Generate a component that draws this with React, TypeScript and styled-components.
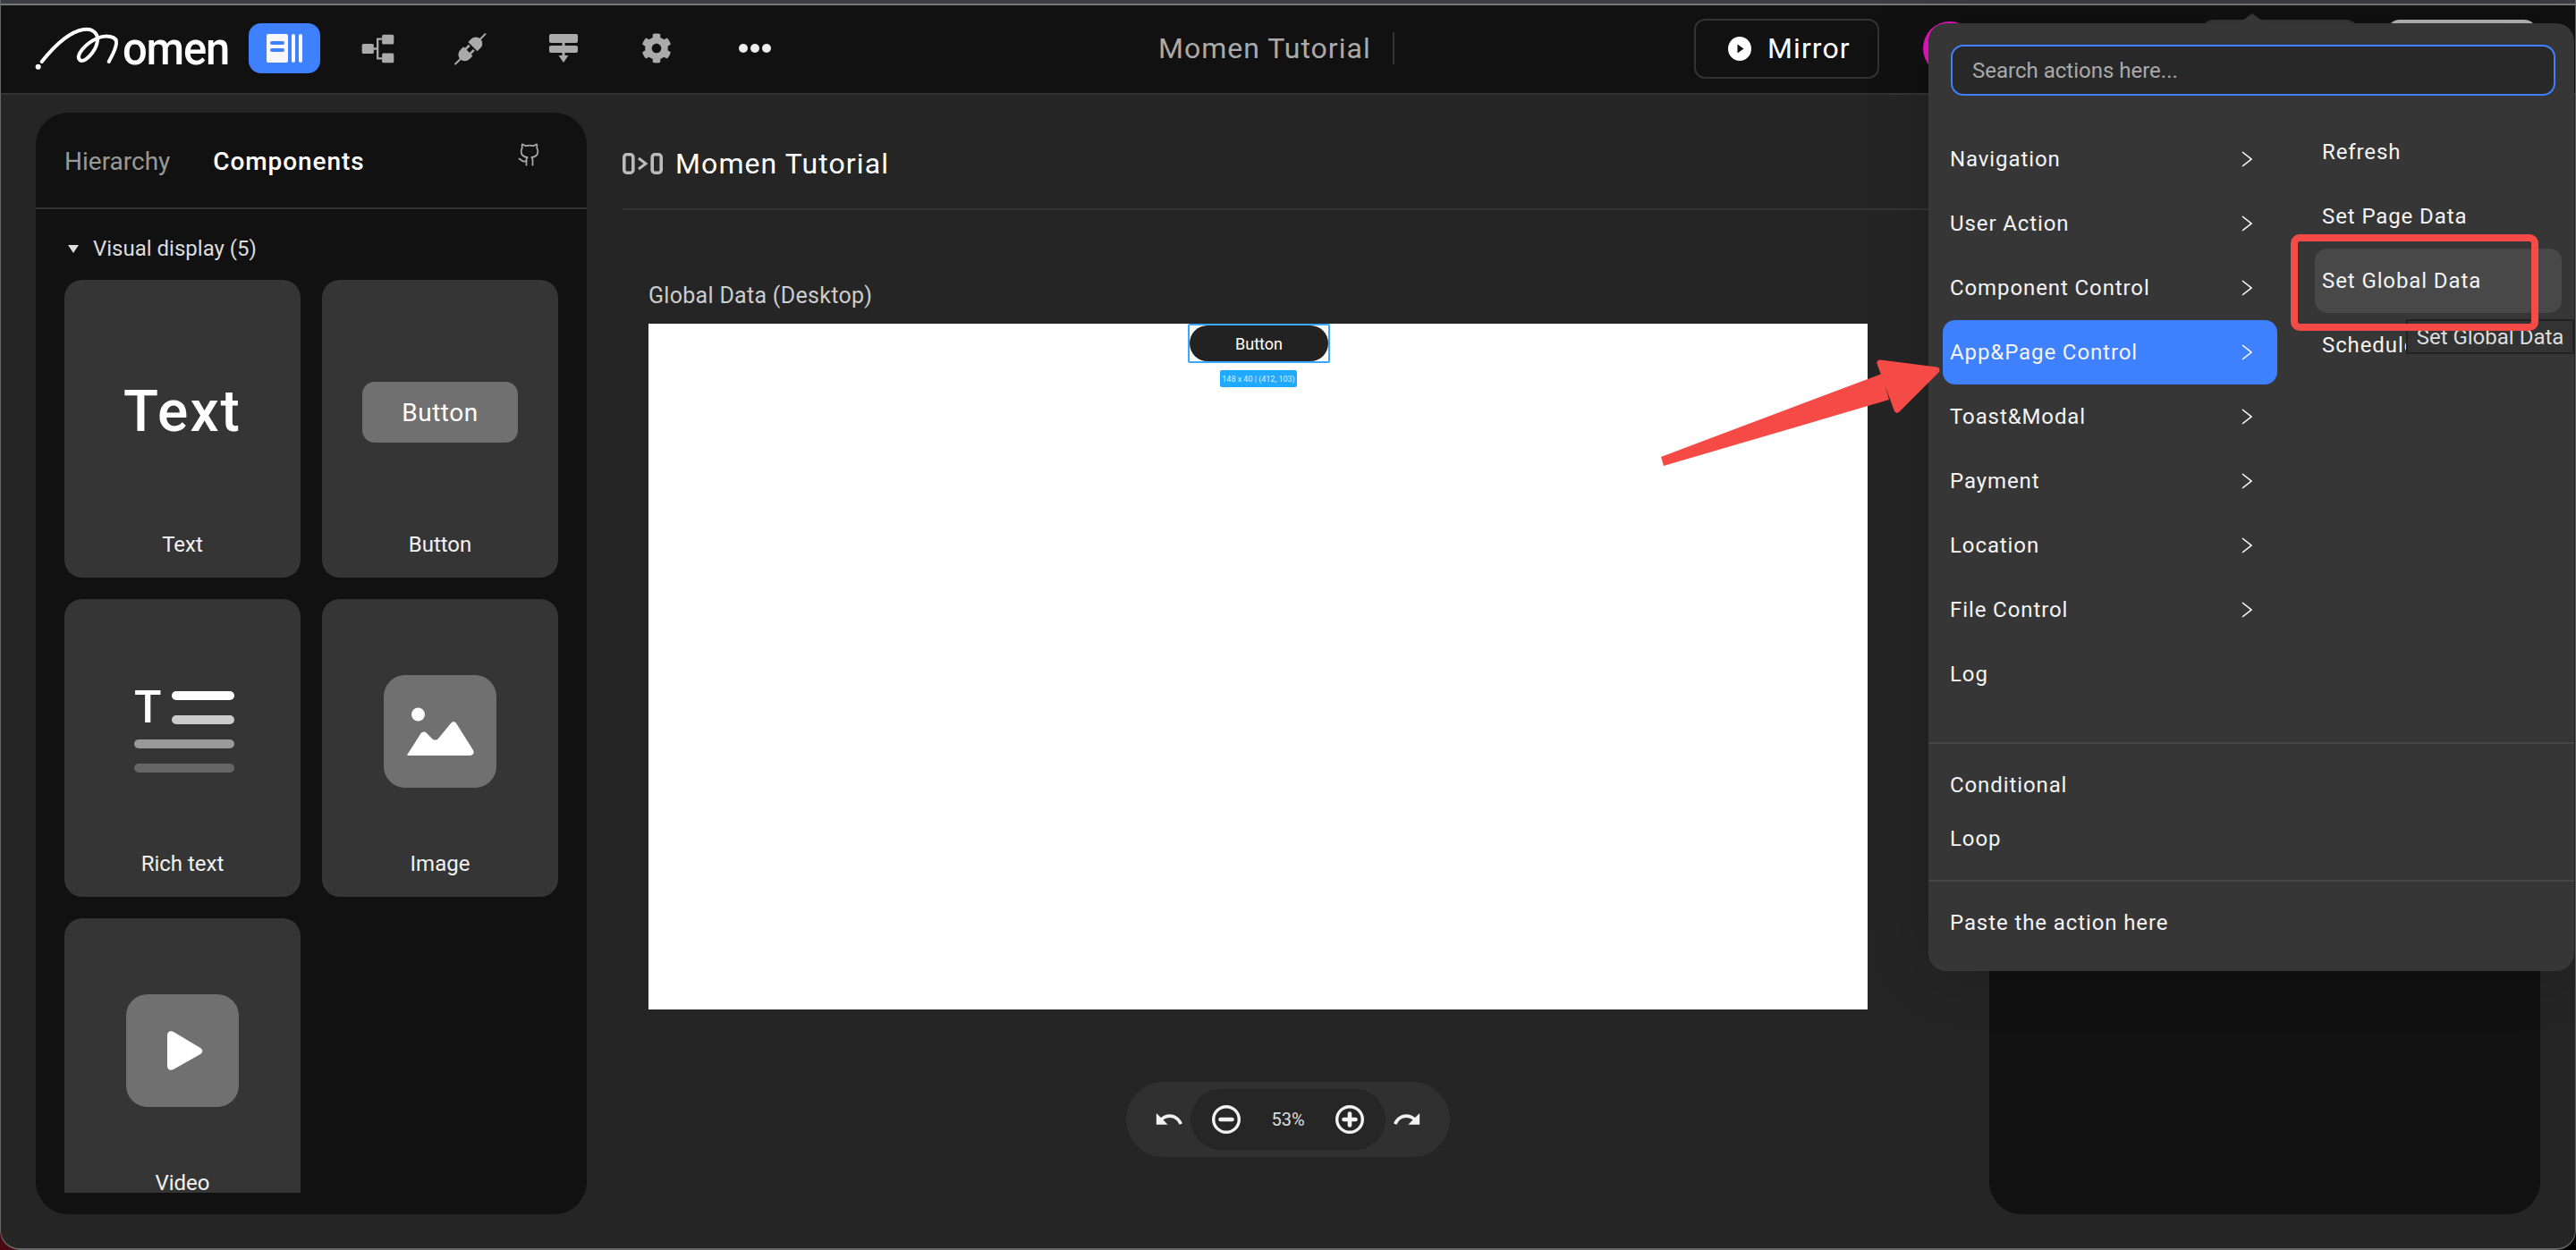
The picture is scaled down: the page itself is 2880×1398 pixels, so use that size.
import styled, { createGlobalStyle } from "styled-components";
import { Github } from "lucide-react";
import { FaCog } from "react-icons/fa";
import { MdRedo, MdUndo } from "react-icons/md";

const GlobalStyle = createGlobalStyle`
  html, body {
    margin: 0;
    padding: 0;
    background: linear-gradient(90deg, #4a0a14 50%, #000 50%);
  }
  * {
    box-sizing: border-box;
  }
  body {
    font-family: Roboto, "Liberation Sans", sans-serif;
    color: #fff;
  }
`;

const Frame = styled.div`
  position: relative;
  width: 2880px;
  height: 1398px;
  display: flex;
  flex-direction: column;
  overflow: hidden;
  background: #252525;
  border: 1px solid #666;
  border-top: 0;
  border-bottom-width: 2px;
  border-radius: 0 0 22px 22px;
`;

const TitleStrip = styled.div`
  height: 6px;
  flex: none;
  margin: 0 -1px;
  background: #3a3c42;
  border-bottom: 2px solid #777;
`;

const TopBar = styled.header`
  height: 100px;
  flex: none;
  display: flex;
  align-items: center;
  padding: 0 43px 2px 29px;
  background: #111;
  border-bottom: 2px solid #333;
`;

const Logo = styled.div`
  width: 240px;
  height: 70px;
  margin-right: 8px;
  display: flex;
  align-items: center;
`;

const LogoWord = styled.span`
  font-size: 52px;
  font-weight: 500;
  line-height: 70px;
  letter-spacing: -1.2px;
  margin-top: 2px;
  color: #fff;
  transform: scaleX(0.94);
  transform-origin: left center;
`;

const Nav = styled.nav`
  display: flex;
  gap: 24px;
`;

const NavButton = styled.div<{ $active?: boolean; $shift?: number }>`
  width: 80px;
  height: 56px;
  display: flex;
  align-items: center;
  justify-content: center;
  border-radius: 14px;
  color: #aaa;
  background: ${(p) => (p.$active ? "#3f80ff" : "transparent")};
  margin-left: ${(p) => p.$shift ?? 0}px;
`;

const Dot = styled.i`
  width: 10px;
  height: 10px;
  margin: 0 1.5px;
  border-radius: 50%;
  background: #eee;
`;

const ProjectName = styled.div`
  margin-left: 411px;
  padding-right: 24px;
  height: 36px;
  display: flex;
  align-items: center;
  font-size: 32px;
  letter-spacing: 1px;
  color: #aaa;
  border-right: 2px solid #333;
`;

const TopActions = styled.div`
  margin-left: auto;
  display: flex;
  align-items: center;
`;

const MirrorButton = styled.div`
  width: 207px;
  height: 67px;
  display: flex;
  align-items: center;
  gap: 18px;
  padding-left: 36px;
  margin-right: 49px;
  border: 2px solid #333;
  border-radius: 12px;
  font-size: 32px;
  letter-spacing: 1.1px;
`;

const Avatar = styled.div`
  width: 60px;
  height: 60px;
  margin-right: 251px;
  border-radius: 50%;
  background: #e815c0;
`;

const ShareButton = styled.div<{ $light?: boolean }>`
  width: ${(p) => (p.$light ? 167 : 176)}px;
  height: 64px;
  margin-right: ${(p) => (p.$light ? 0 : 32)}px;
  border-radius: 14px;
  background: ${(p) => (p.$light ? "#bbb" : "#373737")};
`;

const Body = styled.main`
  flex: 1;
  min-height: 0;
  display: flex;
  padding: 20px 39px 38px;
`;

const SidePanel = styled.section`
  width: 616px;
  flex: none;
  display: flex;
  flex-direction: column;
  padding-bottom: 24px;
  background: #111;
  border-radius: 36px;
  overflow: hidden;
`;

const TabRow = styled.div`
  height: 108px;
  flex: none;
  display: flex;
  align-items: center;
  padding: 0 50px 0 32px;
  border-bottom: 2px solid #333;
`;

const Tab = styled.div<{ $active?: boolean }>`
  font-size: 28px;
  padding-top: 2px;
  font-weight: ${(p) => (p.$active ? 500 : 400)};
  letter-spacing: ${(p) => (p.$active ? 0.9 : 0)}px;
  color: ${(p) => (p.$active ? "#fff" : "#999")};
  margin-right: 48px;
`;

const GithubLink = styled.div`
  margin-left: auto;
  margin-top: -12px;
  color: #aaa;
  display: flex;
`;

const SectionHead = styled.div`
  display: flex;
  align-items: center;
  height: 28px;
  margin: 30px 0 21px 36px;
  font-size: 24px;
  color: #ddd;
`;

const Caret = styled.i`
  width: 0;
  height: 0;
  margin-right: 16px;
  border-left: 6px solid transparent;
  border-right: 6px solid transparent;
  border-top: 9px solid #ddd;
`;

const CardScroll = styled.div`
  flex: 1;
  min-height: 0;
  overflow: hidden;
  padding: 0 32px;
`;

const CardGrid = styled.div`
  display: grid;
  grid-template-columns: 264px 264px;
  gap: 24px;
`;

const Card = styled.div`
  height: 333px;
  display: flex;
  flex-direction: column;
  align-items: center;
  padding-bottom: 25px;
  background: #353535;
  border-radius: 20px;
`;

const CardPreview = styled.div`
  flex: 1;
  width: 100%;
  display: flex;
  align-items: center;
  justify-content: center;
  padding-top: 12px;
`;

const CardLabel = styled.div`
  font-size: 24px;
  line-height: 24px;
  color: #f2f2f2;
`;

const BigText = styled.span`
  font-size: 64px;
  font-weight: 500;
  line-height: 1;
  letter-spacing: 2px;
`;

const PreviewButton = styled.div`
  width: 174px;
  height: 68px;
  display: flex;
  align-items: center;
  justify-content: center;
  border-radius: 14px;
  background: #707070;
  font-size: 28px;
  letter-spacing: 0.5px;
`;

const PreviewTile = styled.div`
  width: 126px;
  height: 126px;
  display: flex;
  align-items: center;
  justify-content: center;
  border-radius: 24px;
  background: #707070;
`;

const RichIcon = styled.div`
  width: 112px;
  margin-left: 4px;
  display: grid;
  grid-template-columns: 42px 70px;
  grid-auto-rows: 10px;
  row-gap: 17px;
`;

const RichGlyph = styled.span`
  grid-row: 1 / 3;
  font-size: 50px;
  font-weight: 500;
  line-height: 37px;
`;

const RichBar = styled.i<{ $tone: string; $wide?: boolean }>`
  display: block;
  border-radius: 5px;
  background: ${(p) => p.$tone};
  grid-column: ${(p) => (p.$wide ? "1 / 3" : "2")};
`;

const CenterColumn = styled.section`
  flex: 1;
  min-width: 0;
  margin: 0 40px;
  display: flex;
  flex-direction: column;
`;

const CanvasHeader = styled.div`
  height: 109px;
  flex: none;
  display: flex;
  align-items: center;
  gap: 14px;
  padding-top: 7px;
  border-bottom: 2px solid #333;
  font-size: 32px;
  letter-spacing: 1.1px;
`;

const Stage = styled.div`
  margin: 81px 0 0 29px;
`;

const StageLabel = styled.div`
  font-size: 25px;
  line-height: 30px;
  letter-spacing: 0.3px;
  margin-bottom: 16px;
  color: #ccc;
`;

const Canvas = styled.div`
  width: 1363px;
  height: 767px;
  display: flex;
  justify-content: center;
  background: #fff;
`;

const Selection = styled.div`
  position: relative;
  width: 159px;
  height: 44px;
  border: 2px solid #3ba8ff;
  border-radius: 2px;
  margin-left: 2px;
`;

const CanvasButton = styled.div`
  height: 100%;
  display: flex;
  align-items: center;
  justify-content: center;
  border-radius: 20px;
  background: #222;
  font-size: 18px;
`;

const SizeTag = styled.span`
  position: absolute;
  top: 50px;
  left: 34px;
  width: 86px;
  height: 19px;
  display: flex;
  align-items: center;
  justify-content: center;
  border-radius: 2px;
  background: #1faaff;
  color: #d4eeff;
  font-size: 9px;
  white-space: nowrap;
`;

const ZoomBar = styled.div`
  align-self: center;
  width: 362px;
  height: 84px;
  margin-top: 81px;
  display: flex;
  align-items: center;
  justify-content: space-between;
  padding: 0 31px;
  border-radius: 42px;
  background: #303030;
  color: #f2f2f2;
`;

const ZoomInner = styled.div`
  width: 218px;
  height: 68px;
  flex: none;
  display: flex;
  align-items: center;
  justify-content: space-between;
  padding: 0 24px;
  border-radius: 34px;
  background: #262626;
`;

const ZoomValue = styled.span`
  font-size: 20px;
  color: #ddd;
`;

const RightPanel = styled.aside`
  width: 616px;
  flex: none;
  background: #111;
  border-radius: 36px;
`;

const Popup = styled.div`
  position: absolute;
  top: 26px;
  left: 2155px;
  width: 722px;
  height: 1060px;
  background: #363636;
  border-radius: 20px;
  box-shadow: 0 0 70px rgba(0, 0, 0, 0.18);
  &::before {
    content: "";
    position: absolute;
    top: -11px;
    left: 347px;
    border-left: 15px solid transparent;
    border-right: 15px solid transparent;
    border-bottom: 11px solid #363636;
  }
`;

const SearchBox = styled.div`
  height: 57px;
  margin: 24px 21px 0 25px;
  display: flex;
  align-items: center;
  padding-left: 22px;
  border: 2px solid #3f80ff;
  border-radius: 14px;
  background: #282828;
  font-size: 24px;
  color: #aaa;
`;

const Columns = styled.div`
  height: 725px;
  display: flex;
  align-items: flex-start;
  border-bottom: 2px solid #484848;
`;

const MainList = styled.div`
  width: 374px;
  margin: 35px 0 0 16px;
`;

const SubList = styled.div`
  width: 276px;
  margin: 27px 0 0 42px;
`;

const Row = styled.div<{ $active?: boolean }>`
  height: 72px;
  display: flex;
  align-items: center;
  justify-content: space-between;
  padding: 0 28px 0 8px;
  border-radius: 14px;
  font-size: 24px;
  letter-spacing: 0.9px;
  color: #f4f4f4;
  background: ${(p) => (p.$active ? "#3f80ff" : "transparent")};
`;

const SubRow = styled.div<{ $hover?: boolean }>`
  height: 72px;
  display: flex;
  align-items: center;
  padding-left: 8px;
  border-radius: 14px;
  font-size: 24px;
  letter-spacing: 0.9px;
  color: #f4f4f4;
  background: ${(p) => (p.$hover ? "#484848" : "transparent")};
`;

const FlatGroup = styled.div<{ $line?: boolean }>`
  padding: 16px 0;
  border-bottom: ${(p) => (p.$line ? "2px solid #484848" : "0")};
`;

const FlatRow = styled.div`
  height: 60px;
  display: flex;
  align-items: center;
  padding-left: 24px;
  font-size: 24px;
  letter-spacing: 0.9px;
  color: #f4f4f4;
`;

const Tooltip = styled.div`
  position: absolute;
  top: 331px;
  right: 0;
  width: 188px;
  height: 39px;
  display: flex;
  align-items: center;
  justify-content: center;
  background: #333;
  border: 2px solid #222;
  font-size: 24px;
  color: #ddd;
  white-space: nowrap;
  overflow: hidden;
`;

const Highlight = styled.div`
  position: absolute;
  top: 262px;
  left: 2560px;
  width: 277px;
  height: 108px;
  border: 8px solid #f54a45;
  border-radius: 10px;
`;

const ArrowMark = styled.svg`
  position: absolute;
  top: 395px;
  left: 1849px;
`;

const PlayMark = styled.svg`
  margin-left: 6px;
`;

const LogoMark = () => (
  <svg width="107" height="70" viewBox="0 0 321 210" fill="none">
    <circle cx="38" cy="167" r="9" fill="#fff" />
    <path
      d="M50 150C90 100 140 50 190 42C225 36 242 60 236 85C230 115 195 155 178 145C162 130 195 90 235 72C262 60 305 62 300 90C296 115 285 130 275 150"
      stroke="#fff"
      strokeWidth="12"
      strokeLinecap="round"
    />
  </svg>
);

const PanelIcon = () => (
  <svg width="40" height="32" viewBox="0 0 40 32">
    <rect width="24" height="32" rx="2" fill="#f7f7f7" />
    <rect x="4" y="8" width="16" height="4" rx="2" fill="#3f80ff" />
    <rect x="4" y="16" width="16" height="4" rx="2" fill="#3f80ff" />
    <rect x="28" width="4" height="32" rx="2" fill="#f7f7f7" />
    <rect x="36" width="4" height="32" rx="2" fill="#f7f7f7" />
  </svg>
);

const TreeIcon = () => (
  <svg width="37" height="33" viewBox="400 55 112 100" fill="#aaa">
    <rect x="402" y="88" width="40" height="34" rx="5" />
    <rect x="470" y="57" width="40" height="33" rx="5" />
    <rect x="470" y="120" width="40" height="33" rx="5" />
    <path d="M440 105H455M470 72H455V138H470" fill="none" stroke="#aaa" strokeWidth="7" />
  </svg>
);

const PlugIcon = () => (
  <svg width="38" height="37" viewBox="710 50 115 110" fill="#aaa">
    <g transform="translate(768 105) rotate(45)">
      <path d="M-22-10H22V-25A22 22 0 0 0-22-25Z" />
      <rect x="-3" y="-73" width="6" height="30" rx="3" />
      <path d="M-22 12H22V28A22 22 0 0 1-22 28Z" />
      <rect x="-15" y="-5" width="8" height="20" />
      <rect x="7" y="-5" width="8" height="20" />
      <rect x="-3" y="46" width="6" height="30" rx="3" />
    </g>
  </svg>
);

const MergeIcon = () => (
  <svg width="32" height="32" viewBox="0 0 32 32" fill="#aaa">
    <rect width="32" height="10" rx="2" />
    <rect y="13" width="32" height="8" rx="2" />
    <rect x="14.5" y="9" width="3" height="16" />
    <path d="M10.5 24H21.5L16 32Z" />
  </svg>
);

const PlayBadge = () => (
  <svg width="26" height="27" viewBox="0 0 26 27">
    <ellipse cx="13" cy="13.5" rx="13" ry="13.5" fill="#fff" />
    <path d="M10.5 8.5L17.5 13.5L10.5 18.5Z" fill="#111" />
  </svg>
);

const RouteIcon = () => (
  <svg width="45" height="24" viewBox="0 0 45 24" fill="none" stroke="#bbb" strokeWidth="3.6">
    <rect x="1.800" y="1.800" width="10" height="20.400" rx="3" />
    <rect x="33.200" y="1.800" width="10" height="20.400" rx="3" />
    <path d="M18 6L26 12L18 18" strokeWidth="3" />
  </svg>
);

const ImageGlyph = () => (
  <svg width="76" height="54" viewBox="0 0 76 54" fill="#fff">
    <circle cx="13.5" cy="8" r="7.5" />
    <path d="M2 52L16 30C18 27 21 27 23 29L29 35C31 37 34 37 36 35L50 18C52 15.5 55 16 56.5 18.500L75 48C76.500 51 75 54 72 54H4C1 54 0.500 54 2 52Z" />
  </svg>
);

const PlayGlyph = () => (
  <PlayMark width="40" height="44" viewBox="0 0 40 44" fill="#fff">
    <path d="M0 5C0 1 3-1 7 1L37 19C40 21 40 24 37 26L7 43C3 45 0 43 0 39Z" />
  </PlayMark>
);

const MenuChevron = () => (
  <svg width="12" height="18" viewBox="0 0 12 18" fill="none" stroke="#fff" strokeWidth="1.6">
    <path d="M1 1L11 9L1 17" />
  </svg>
);

const ZoomIcon = ({ plus }: { plus?: boolean }) => (
  <svg width="32" height="32" viewBox="0 0 32 32" fill="none" stroke="#f2f2f2">
    <circle cx="16" cy="16" r="14.300" strokeWidth="3.400" />
    <path d="M9.500 16H22.500" strokeWidth="4.600" strokeLinecap="round" />
    {plus && <path d="M16 9.500V22.500" strokeWidth="4.600" strokeLinecap="round" />}
  </svg>
);

const menuRows = [
  { label: "Navigation", more: true },
  { label: "User Action", more: true },
  { label: "Component Control", more: true },
  { label: "App&Page Control", more: true, active: true },
  { label: "Toast&Modal", more: true },
  { label: "Payment", more: true },
  { label: "Location", more: true },
  { label: "File Control", more: true },
  { label: "Log", more: false },
];

const subRows = ["Refresh", "Set Page Data", "Set Global Data", "Schedule"];

const App = () => {
  return (
    <>
      <GlobalStyle />
      <Frame>
        <TitleStrip />
        <TopBar>
          <Logo>
            <LogoMark />
            <LogoWord>omen</LogoWord>
          </Logo>
          <Nav>
            <NavButton $active>
              <PanelIcon />
            </NavButton>
            <NavButton>
              <TreeIcon />
            </NavButton>
            <NavButton>
              <PlugIcon />
            </NavButton>
            <NavButton>
              <MergeIcon />
            </NavButton>
            <NavButton>
              <FaCog size={34} />
            </NavButton>
            <NavButton $shift={6}>
              <Dot />
              <Dot />
              <Dot />
            </NavButton>
          </Nav>
          <ProjectName>Momen Tutorial</ProjectName>
          <TopActions>
            <MirrorButton>
              <PlayBadge />
              Mirror
            </MirrorButton>
            <Avatar />
            <ShareButton />
            <ShareButton $light />
          </TopActions>
        </TopBar>

        <Body>
          <SidePanel>
            <TabRow>
              <Tab>Hierarchy</Tab>
              <Tab $active>Components</Tab>
              <GithubLink>
                <Github size={28} strokeWidth={1.5} />
              </GithubLink>
            </TabRow>
            <SectionHead>
              <Caret />
              Visual display (5)
            </SectionHead>
            <CardScroll>
              <CardGrid>
                <Card>
                  <CardPreview>
                    <BigText>Text</BigText>
                  </CardPreview>
                  <CardLabel>Text</CardLabel>
                </Card>
                <Card>
                  <CardPreview>
                    <PreviewButton>Button</PreviewButton>
                  </CardPreview>
                  <CardLabel>Button</CardLabel>
                </Card>
                <Card>
                  <CardPreview>
                    <RichIcon>
                      <RichGlyph>T</RichGlyph>
                      <RichBar $tone="#fff" />
                      <RichBar $tone="#ccc" />
                      <RichBar $tone="#999" $wide />
                      <RichBar $tone="#666" $wide />
                    </RichIcon>
                  </CardPreview>
                  <CardLabel>Rich text</CardLabel>
                </Card>
                <Card>
                  <CardPreview>
                    <PreviewTile>
                      <ImageGlyph />
                    </PreviewTile>
                  </CardPreview>
                  <CardLabel>Image</CardLabel>
                </Card>
                <Card>
                  <CardPreview>
                    <PreviewTile>
                      <PlayGlyph />
                    </PreviewTile>
                  </CardPreview>
                  <CardLabel>Video</CardLabel>
                </Card>
              </CardGrid>
            </CardScroll>
          </SidePanel>

          <CenterColumn>
            <CanvasHeader>
              <RouteIcon />
              Momen Tutorial
            </CanvasHeader>
            <Stage>
              <StageLabel>Global Data (Desktop)</StageLabel>
              <Canvas>
                <Selection>
                  <CanvasButton>Button</CanvasButton>
                  <SizeTag>148 x 40 | (412, 103)</SizeTag>
                </Selection>
              </Canvas>
            </Stage>
            <ZoomBar>
              <MdUndo size={34} />
              <ZoomInner>
                <ZoomIcon />
                <ZoomValue>53%</ZoomValue>
                <ZoomIcon plus />
              </ZoomInner>
              <MdRedo size={34} />
            </ZoomBar>
          </CenterColumn>

          <RightPanel />
        </Body>

        <Popup>
          <SearchBox>Search actions here...</SearchBox>
          <Columns>
            <MainList>
              {menuRows.map((row) => (
                <Row key={row.label} $active={row.active}>
                  {row.label}
                  {row.more && <MenuChevron />}
                </Row>
              ))}
            </MainList>
            <SubList>
              {subRows.map((label) => (
                <SubRow key={label} $hover={label === "Set Global Data"}>
                  {label}
                </SubRow>
              ))}
            </SubList>
          </Columns>
          <FlatGroup $line>
            <FlatRow>Conditional</FlatRow>
            <FlatRow>Loop</FlatRow>
          </FlatGroup>
          <FlatGroup>
            <FlatRow>Paste the action here</FlatRow>
          </FlatGroup>
          <Tooltip>Set Global Data</Tooltip>
        </Popup>

        <Highlight />

        <ArrowMark width="325" height="135" viewBox="1850 395 325 135">
          <path d="M1857 511L2104 418L2112 447L1860 521Z" fill="#f54a45" />
          <path
            d="M2102 406L2165 414L2121 458Z"
            fill="#f54a45"
            stroke="#f54a45"
            strokeWidth="7"
            strokeLinejoin="round"
          />
        </ArrowMark>
      </Frame>
    </>
  );
};

export default App;
